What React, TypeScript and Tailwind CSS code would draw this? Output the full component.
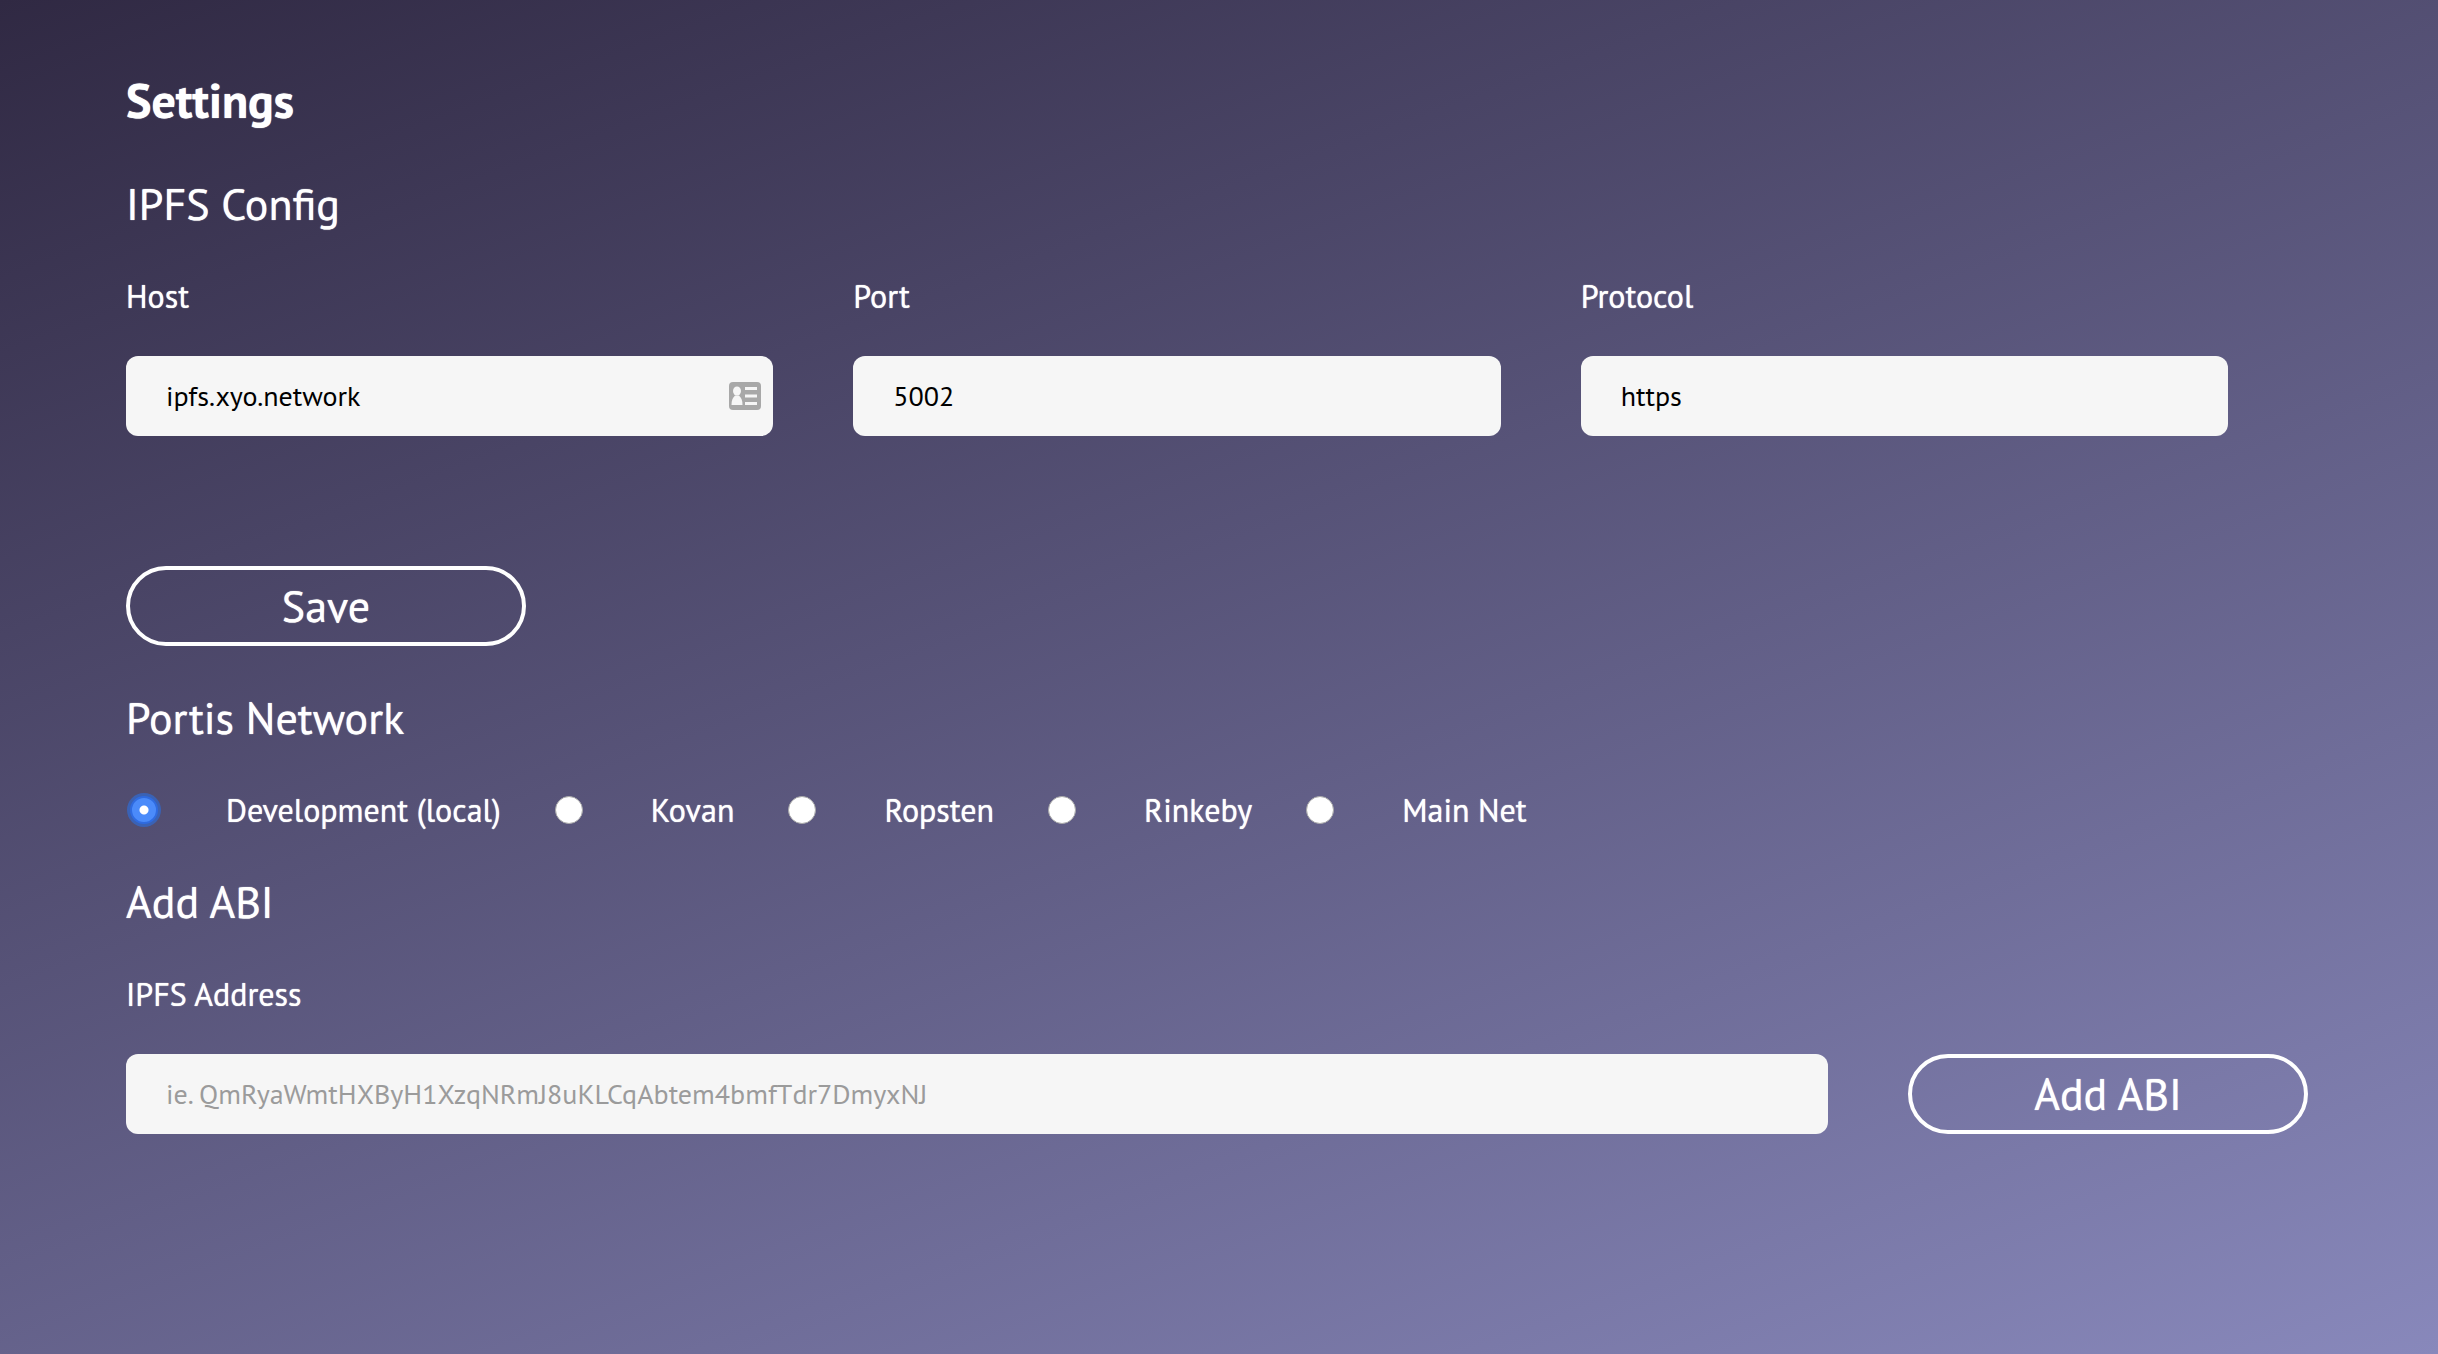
import { useState } from "react";

const NETWORKS = ["Development (local)", "Kovan", "Ropsten", "Rinkeby", "Main Net"];

const inputClass =
  "block h-20 w-full rounded-xl bg-[#f6f6f6] px-10 pb-0.5 text-[28px] text-black outline-none placeholder:text-[#9b9b9b]";
const buttonClass =
  "h-20 w-[400px] shrink-0 cursor-pointer rounded-full border-4 border-white text-[44px] leading-[56px] text-white [text-shadow:0_0_1px_#fff]";
const headingClass = "text-[44px] leading-[56px]";
const labelClass = "mb-10 block text-[32px] leading-10";

function ContactCardIcon() {
  return (
    <svg viewBox="0 0 32 28" className="h-7 w-8" aria-hidden="true">
      <rect width="32" height="28" rx="4" fill="#a8a8a8" />
      <g fill="#f6f6f6">
        <ellipse cx="8" cy="9" rx="4" ry="4.5" />
        <path d="M2.500 23c0-4.500 1-7 3.500-9.500h4c2.500 2.500 3.500 5 3.500 9.500z" />
        <rect x="16" y="5" width="12" height="3" />
        <rect x="16" y="12.500" width="12" height="3" />
        <rect x="16" y="20" width="12" height="3" />
      </g>
    </svg>
  );
}

function Field({ id, label, value, icon }: { id: string; label: string; value: string; icon?: boolean }) {
  return (
    <div>
      <label htmlFor={id} className={labelClass}>
        {label}
      </label>
      <div className="relative">
        <input id={id} type="text" defaultValue={value} className={inputClass} />
        {icon && (
          <span className="pointer-events-none absolute inset-y-0 right-3 flex items-center">
            <ContactCardIcon />
          </span>
        )}
      </div>
    </div>
  );
}

export default function App() {
  const [network, setNetwork] = useState(NETWORKS[0]);

  return (
    <main className="flex min-h-screen flex-col gap-11 bg-[linear-gradient(160deg,#302943_0%,#8888bb_100%)] pt-[68px] pr-[130px] pb-16 pl-[126px] font-['PT_Sans','Noto_Sans',sans-serif] text-white [text-shadow:0_0_1px_#fff]">
      <h1 className="text-[48px] leading-[64px] font-bold">Settings</h1>

      <h2 className={headingClass}>IPFS Config</h2>
      <form onSubmit={(e) => e.preventDefault()}>
        <div className="mr-20 grid grid-cols-3 gap-20">
          <Field id="host" label="Host" value="ipfs.xyo.network" icon />
          <Field id="port" label="Port" value="5002" />
          <Field id="protocol" label="Protocol" value="https" />
        </div>
        <button type="submit" className={`${buttonClass} mt-[130px] block`}>
          Save
        </button>
      </form>

      <h2 className={headingClass}>Portis Network</h2>
      <div role="radiogroup" aria-label="Portis Network" className="flex flex-wrap gap-x-[54px] pl-1">
        {NETWORKS.map((name) => (
          <label key={name} className="flex cursor-pointer items-center gap-[68px] text-[32px] leading-10">
            <input
              type="radio"
              name="network"
              checked={network === name}
              onChange={() => setNetwork(name)}
              className="size-7 appearance-none rounded-full border border-[#a9a9a9] bg-white outline-none checked:border-2 checked:border-[#2f6be0] checked:bg-[radial-gradient(circle,#ffffff_0_4px,#4b8bfa_5px)] checked:ring-3 checked:ring-[#3a62b5]"
            />
            {name}
          </label>
        ))}
      </div>

      <h2 className={headingClass}>Add ABI</h2>
      <form onSubmit={(e) => e.preventDefault()} className="flex items-end gap-20">
        <div className="grow">
          <label htmlFor="address" className={labelClass}>
            IPFS Address
          </label>
          <input
            id="address"
            type="text"
            placeholder="ie. QmRyaWmtHXByH1XzqNRmJ8uKLCqAbtem4bmfTdr7DmyxNJ"
            className={inputClass}
          />
        </div>
        <button type="submit" className={buttonClass}>
          Add ABI
        </button>
      </form>
    </main>
  );
}
